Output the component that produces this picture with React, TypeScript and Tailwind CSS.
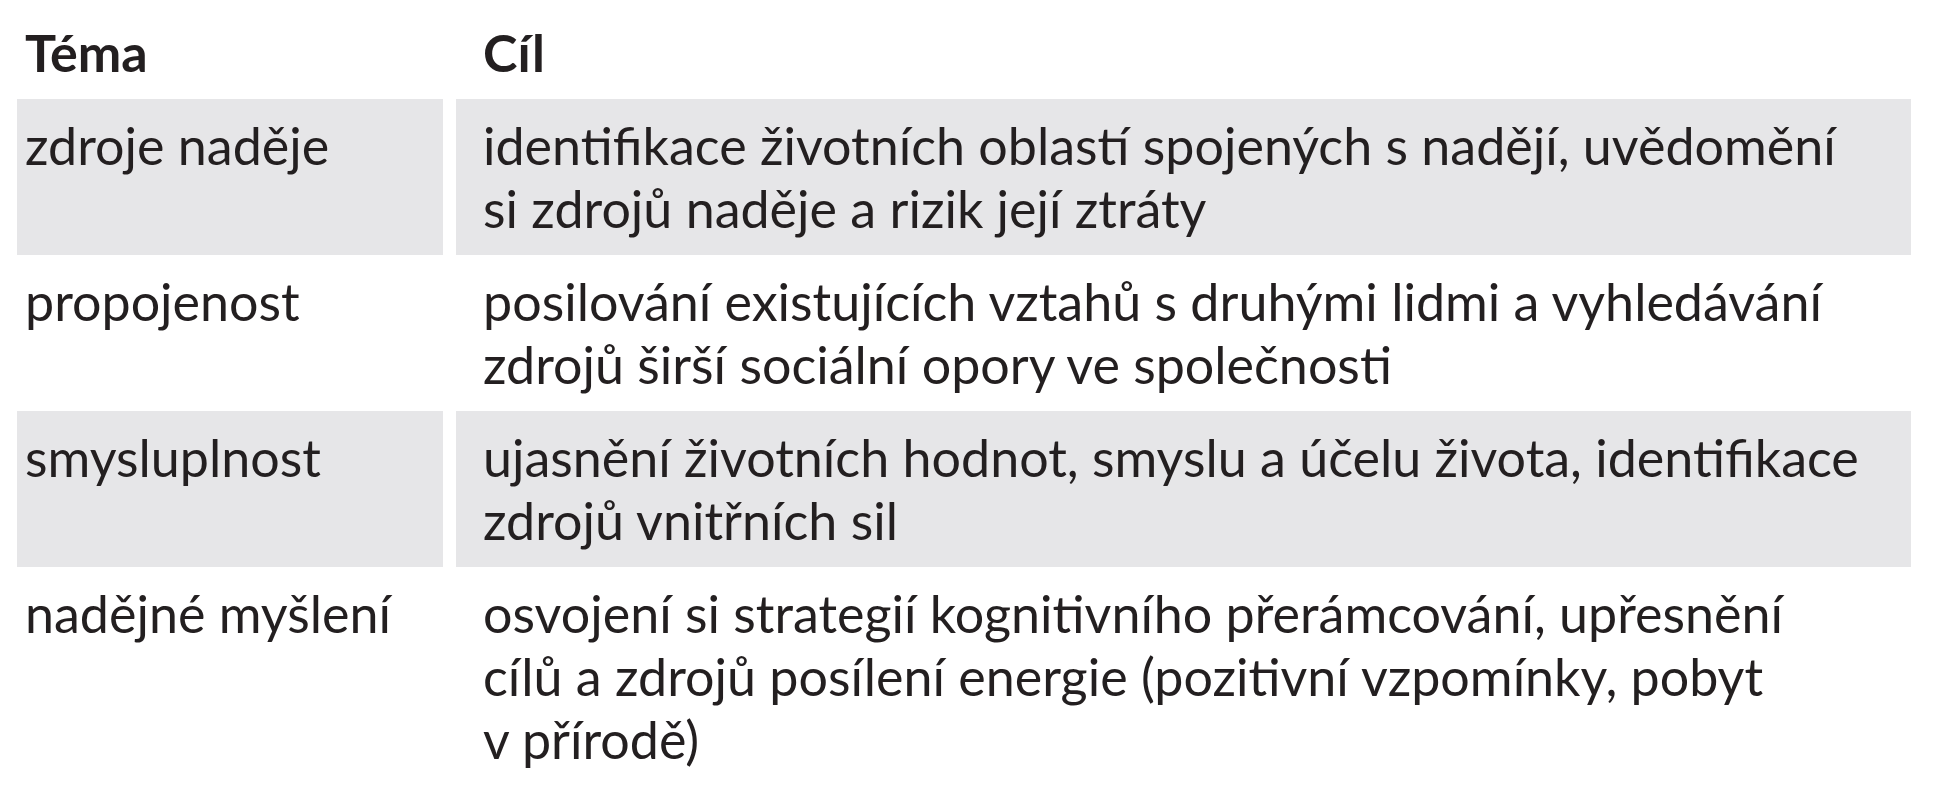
const rows: { tema: string; cil: string[] }[] = [
  {
    tema: "zdroje naděje",
    cil: ["identifikace životních oblastí spojených s nadějí, uvědomění", "si zdrojů naděje a rizik její ztráty"],
  },
  {
    tema: "propojenost",
    cil: ["posilování existujících vztahů s druhými lidmi a vyhledávání", "zdrojů širší sociální opory ve společnosti"],
  },
  {
    tema: "smysluplnost",
    cil: ["ujasnění životních hodnot, smyslu a účelu života, identifikace", "zdrojů vnitřních sil"],
  },
  {
    tema: "nadějné myšlení",
    cil: [
      "osvojení si strategií kognitivního přerámcování, upřesnění",
      "cílů a zdrojů posílení energie (pozitivní vzpomínky, pobyt",
      "v přírodě)",
    ],
  },
];

const App = () => {
  return (
    <div className="min-h-[800px] bg-white pl-[17px] pr-[24px] font-['Lato',sans-serif] text-[52px] leading-[63px] text-[#231f20]">
      <div className="grid grid-cols-[426px_1fr] gap-x-[13px]">
        {/* header */}
        <div className="pl-[8px] pt-[21px] pb-[15px] font-bold">Téma</div>
        <div className="pl-[27px] pt-[21px] pb-[15px] font-bold">Cíl</div>

        {rows.map((row, i) => {
          const bg = i % 2 === 0 ? "bg-[#e6e6e8]" : "bg-white";
          return (
            <div key={row.tema} className="contents">
              <div className={`${bg} pl-[8px] py-[15px] whitespace-nowrap`}>{row.tema}</div>
              <div className={`${bg} pl-[27px] py-[15px]`}>
                {row.cil.map((line) => (
                  <div key={line} className="whitespace-nowrap">
                    {line}
                  </div>
                ))}
              </div>
            </div>
          );
        })}
      </div>
    </div>
  );
};

export default App;
